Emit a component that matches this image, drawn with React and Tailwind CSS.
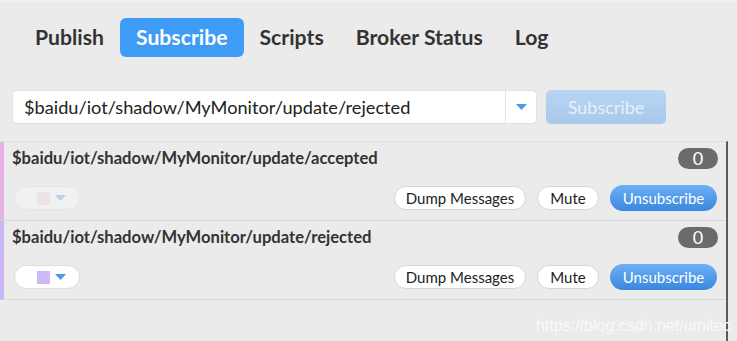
const tabs = ["Publish", "Subscribe", "Scripts", "Broker Status", "Log"];

const subs = [
  { topic: "$baidu/iot/shadow/MyMonitor/update/accepted", bar: "border-l-[#e6b3e6]", swatch: "bg-[#f0d6ea]", faded: true },
  { topic: "$baidu/iot/shadow/MyMonitor/update/rejected", bar: "border-l-[#cbb6f6]", swatch: "bg-[#cdb8f8]", faded: false },
];

function Caret({ className = "" }) {
  return (
    <svg width="11" height="6" viewBox="0 0 11 6" className={className}>
      <path d="M0 0 L11 0 L5.5 6 Z" fill="#4a9be8" />
    </svg>
  );
}

function SubRow({ topic, bar, swatch, faded }) {
  return (
    <div className={`h-[79px] flex flex-col pl-2 pr-2 pt-[6px] border-l-4 ${bar} border-b border-b-[#d9d9d9]`}>
      <div className="flex items-center justify-between h-[21px]">
        <span className="text-[16.6px] font-bold text-[#333]">{topic}</span>
        <span className="w-[40px] h-[21px] rounded-full bg-[#6b6b6b] text-white text-[18px] leading-[21px] text-center">0</span>
      </div>
      <div className="flex items-center justify-between mt-[16px] h-[26px]">
        <div className={`ml-[2px] w-[66px] h-[24px] rounded-full bg-white border border-[#dedede] flex items-center pl-[22px] gap-[5px] ${faded ? "opacity-30" : ""}`}>
          <span className={`w-[13px] h-[13px] ${swatch}`} />
          <Caret />
        </div>
        <div className="flex items-center gap-[11px] mr-px">
          <button className="h-[24px] w-[132px] rounded-full bg-white border border-[#d6d6d6] text-[15px] text-[#222]">Dump Messages</button>
          <button className="h-[24px] w-[62px] rounded-full bg-white border border-[#d6d6d6] text-[15px] text-[#222]">Mute</button>
          <button className="h-[26px] w-[107px] rounded-full bg-gradient-to-b from-[#6cb0f6] to-[#3a87de] text-[15px] text-white">Unsubscribe</button>
        </div>
      </div>
    </div>
  );
}

export default function App() {
  return (
    <div className="relative w-[737px] h-[341px] overflow-hidden bg-[#ebebeb] font-['Lato','Open_Sans',sans-serif] border-t-2 border-t-[#f2f2f2]">
      {/* tabs */}
      <div className="flex pl-[19px] pt-[16px]">
        {tabs.map(t => (
          <div
            key={t}
            className={`h-[39px] px-4 rounded-md text-[21.2px] font-bold leading-[39px] ${t === "Subscribe" ? "bg-[#3f9cf6] text-white" : "text-[#333]"}`}
          >
            {t}
          </div>
        ))}
      </div>

      {/* topic input */}
      <div className="flex items-center ml-[13px] mt-[33px] h-[34px]">
        <div className="flex w-[523px] h-[32px] bg-white rounded-[3px] shadow-[0_0_1px_rgba(0,0,0,0.35)]">
          <div className="flex-1 pl-[11px] text-[18.2px] leading-[32px] text-[#222]">$baidu/iot/shadow/MyMonitor/update/rejected</div>
          <div className="w-[31px] border-l border-[#e2e2e2] flex items-center justify-center">
            <Caret />
          </div>
        </div>
        <button className="ml-[10px] w-[120px] h-[34px] rounded-[5px] bg-gradient-to-b from-[#b8d5f3] to-[#a9c8ec] text-[18px] text-[#e8f0f9]">Subscribe</button>
      </div>

      {/* subscriptions */}
      <div className="mt-[17px] w-[728px] h-[200px] border-r-2 border-r-[#5a5a5a] border-t border-t-[#dedede]">
        {subs.map(s => <SubRow key={s.topic} {...s} />)}
      </div>

      <div className="absolute left-[536px] top-[312px] text-[16px] text-[#f9f9f9] font-['Liberation_Sans',sans-serif]">https://blog.csdn.net/umitec</div>
    </div>
  );
}
